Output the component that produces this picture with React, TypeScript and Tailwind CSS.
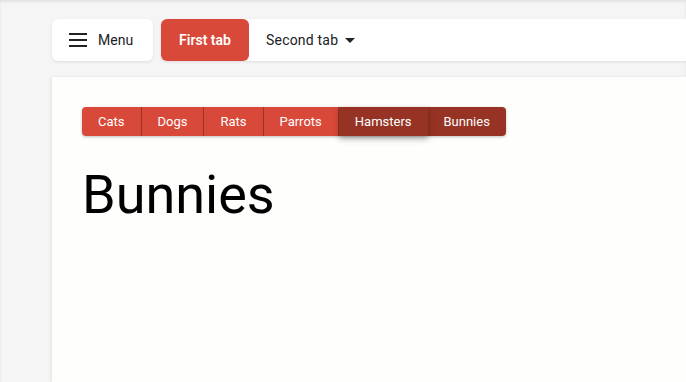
import React, { useState } from "react";

const pets = ["Cats", "Dogs", "Rats", "Parrots", "Hamsters", "Bunnies"];

export default function App() {
  const [selected, setSelected] = useState("Bunnies");

  return (
    <div
      className="min-h-screen bg-[#f5f5f5] pl-[52px] pt-[19px] flex flex-col shadow-[inset_0_2px_3px_rgba(0,0,0,0.08)]"
      style={{ fontFamily: "Roboto, 'Liberation Sans', sans-serif" }}
    >
      {/* Top bar */}
      <div className="flex gap-2 h-[42px]">
        <button className="w-[101px] bg-white rounded-md shadow-[0_1px_3px_rgba(0,0,0,0.1)] flex items-center pl-[17px] gap-[11px] text-[14px] text-[#202124]">
          <svg width="18" height="14" viewBox="0 0 18 14">
            <rect x="0" y="0" width="18" height="2" fill="#222" />
            <rect x="0" y="6" width="18" height="2" fill="#222" />
            <rect x="0" y="12" width="18" height="2" fill="#222" />
          </svg>
          Menu
        </button>
        <div className="flex-1 flex items-center bg-white rounded-l-md shadow-[0_1px_3px_rgba(0,0,0,0.1)]">
          <button className="h-full w-[88px] bg-[#d8493a] rounded-md text-white text-[14px] font-semibold">
            First tab
          </button>
          <button className="ml-[17px] flex items-center gap-[7px] text-[14px] tracking-[0.2px] text-[#202124]">
            Second tab
            <svg width="10" height="5" viewBox="0 0 10 5">
              <path d="M0 0 L10 0 L5 5 Z" fill="#222" />
            </svg>
          </button>
        </div>
      </div>

      {/* Content */}
      <div className="flex-1 mt-4 bg-[#fefefd] shadow-[-1px_0_3px_rgba(0,0,0,0.08)] pt-[30px] pl-[30px]">
        <div className="inline-flex h-[29px] rounded-[4px] shadow-[0_1px_3px_rgba(0,0,0,0.25)]">
          {pets.map((p, i) => {
            const dark = p === "Hamsters" || p === selected;
            return (
              <button
                key={p}
                onClick={() => setSelected(p)}
                className={`${
                  dark ? "bg-[#963325]" : "bg-[#d8493a] border-r border-[#9a3526]"
                } ${i === 0 ? "rounded-l-[4px]" : ""} ${
                  i === pets.length - 1 ? "rounded-r-[4px]" : ""
                } ${
                  p === "Hamsters" ? "relative z-10 shadow-[0_3px_6px_rgba(0,0,0,0.3)]" : ""
                } px-4 text-white text-[13px]`}
              >
                {p}
              </button>
            );
          })}
        </div>
        <h1 className="mt-[32px] text-[54px] leading-none text-black">{selected}</h1>
      </div>
    </div>
  );
}
